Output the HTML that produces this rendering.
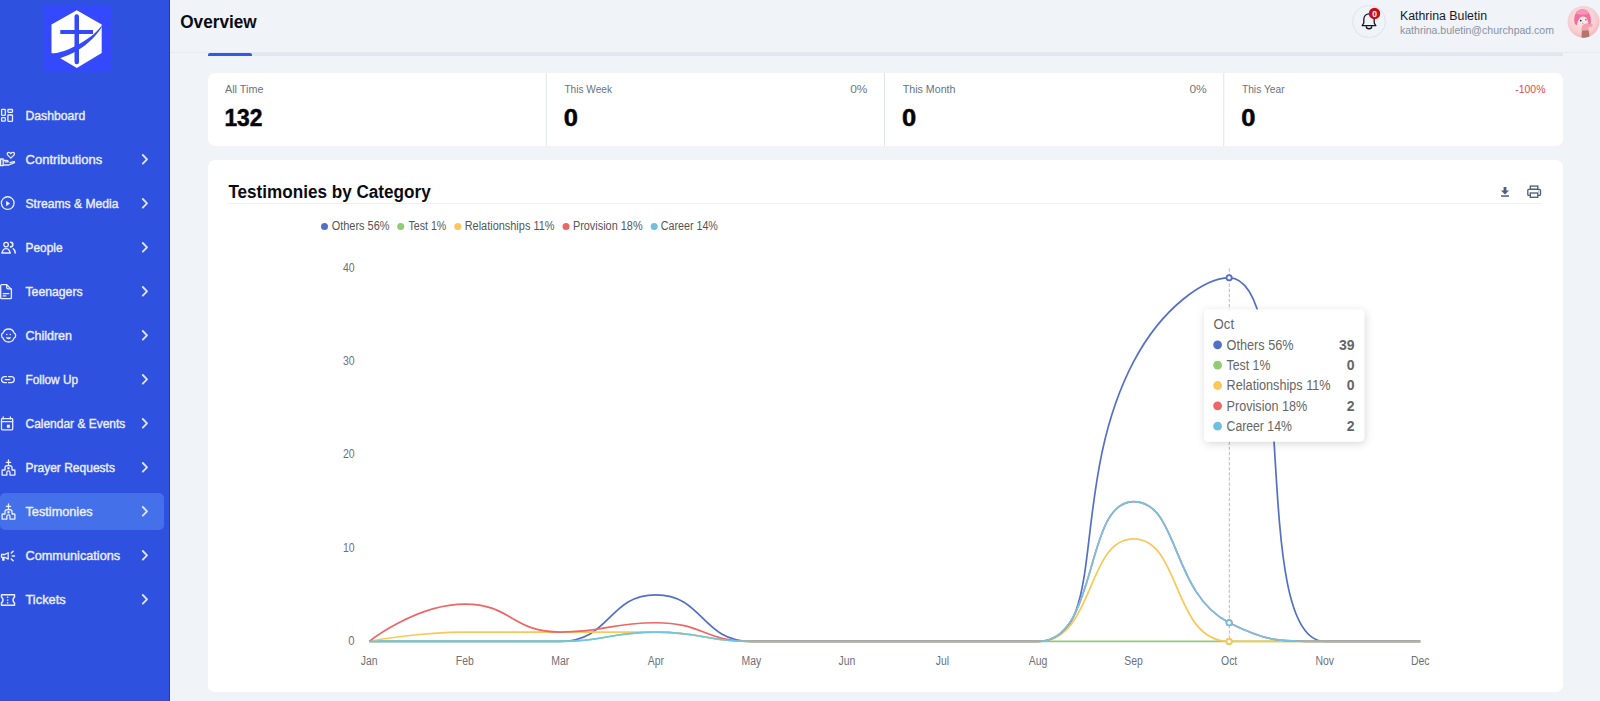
<!DOCTYPE html>
<html><head><meta charset="utf-8">
<style>
*{margin:0;padding:0;box-sizing:border-box}
html,body{width:1600px;height:701px;overflow:hidden;background:#f0f3f8;font-family:"Liberation Sans",sans-serif;position:relative}
.abs{position:absolute}
#sb{position:absolute;left:0;top:0;width:170px;height:701px;background:#2f51e0;border-right:1px solid #0b3de6}
.logo{position:absolute;left:43px;top:5px;width:68px;height:67px;background:#3349fb;border-radius:4px}
.mi{position:absolute;left:0;width:164px;height:38px}
.mi .t{position:absolute;left:25.5px;top:0;line-height:38px;font-size:13px;font-weight:bold;color:#e9edff;white-space:nowrap;letter-spacing:-0.5px}
.mi svg.ic{position:absolute;left:0;top:12px}
.mi svg.ch{position:absolute;left:140px;top:13px}
.active{background:#4470ea;border-radius:5px}
.txt{position:absolute;white-space:nowrap;line-height:1}
.card{position:absolute;background:#fff;border-radius:7px}
svg text{font-family:"Liberation Sans",sans-serif}
</style></head><body>
<div id="sb">
  <div class="logo"></div>
  <svg class="abs" style="left:0;top:0" width="170" height="80" viewBox="0 0 170 80">
    <polygon points="76.8,10.3 101.7,24.5 101.7,53 76.8,68 51.5,53 51.5,24.5" fill="#fff"/>
    <path d="M51.5 53.6 C67.2 53.3 94.6 37.2 101.7 25.3 L101.7 27.3 C87.2 49.8 63.3 58 55.4 59.3 L51.5 53.6 Z" fill="#3349fb"/>
    <rect x="74.5" y="14.3" width="4.5" height="50" rx="2.2" fill="#3349fb"/>
    <rect x="60.3" y="30" width="32.7" height="4" fill="#3349fb"/>
  </svg>
  <div class="abs active" style="left:0;top:493.2px;width:164px;height:37.3px"></div>
<svg class="abs" style="left:0;top:0" width="170" height="701">
<g transform="translate(0,96.00)" fill="none" stroke="#eaeeff" stroke-width="1.3" stroke-linecap="round" stroke-linejoin="round"><rect x="1.6" y="13.3" width="3.7" height="6" rx="0.5"/><rect x="1.6" y="21.7" width="3.7" height="3.4" rx="0.5"/><rect x="7.9" y="13.5" width="4.6" height="2.8" rx="0.5"/><rect x="7.9" y="19" width="4.6" height="6.3" rx="0.5"/></g>
<text x="25.50" y="119.80" font-size="13" fill="#eaeeff" font-weight="normal" text-anchor="start" textLength="59.7" lengthAdjust="spacingAndGlyphs" stroke="#eaeeff" stroke-width="0.4">Dashboard</text>
<g transform="translate(0,140.00)" fill="none" stroke="#eaeeff" stroke-width="1.3" stroke-linecap="round" stroke-linejoin="round"><path d="M10.85 18.1 L7.8 15.1 C6.6 13.9 7.4 12.4 8.9 12.4 C9.8 12.4 10.5 13 10.85 13.7 C11.2 13 11.9 12.4 12.8 12.4 C14.3 12.4 15.1 13.9 13.9 15.1 Z"/><path d="M0.6 19 h2.6 v6.6 h-2.6z"/><path d="M3.2 20.3 h3.4 c0.9 0 1.6 0.6 1.6 1.5 h-3.2 M3.2 25 h5.6 l5.3-2.1 c0.8-0.4 0.4-1.6-0.5-1.3 l-3.6 1.1"/></g>
<text x="25.50" y="163.80" font-size="13" fill="#eaeeff" font-weight="normal" text-anchor="start" textLength="76.7" lengthAdjust="spacingAndGlyphs" stroke="#eaeeff" stroke-width="0.4">Contributions</text>
<path d="M142.8 155.00 l4.2 4.3 -4.2 4.3" fill="none" stroke="#dfe4f7" stroke-width="1.9" stroke-linecap="round" stroke-linejoin="round"/>
<g transform="translate(0,184.00)" fill="none" stroke="#eaeeff" stroke-width="1.3" stroke-linecap="round" stroke-linejoin="round"><circle cx="7.7" cy="19.1" r="6.35"/><path d="M6.1 16.8 l3.9 2.7 -3.9 2.7z" fill="#eaeeff" stroke="none"/></g>
<text x="25.50" y="207.80" font-size="13" fill="#eaeeff" font-weight="normal" text-anchor="start" textLength="92.9" lengthAdjust="spacingAndGlyphs" stroke="#eaeeff" stroke-width="0.4">Streams &amp; Media</text>
<path d="M142.8 199.00 l4.2 4.3 -4.2 4.3" fill="none" stroke="#dfe4f7" stroke-width="1.9" stroke-linecap="round" stroke-linejoin="round"/>
<g transform="translate(0,228.00)" fill="none" stroke="#eaeeff" stroke-width="1.3" stroke-linecap="round" stroke-linejoin="round"><circle cx="6.1" cy="16.6" r="2.3"/><path d="M1.8 25 l1.2-2.6 c0.6-1.2 1.8-1.8 3.1-1.8 s2.5 0.6 3.1 1.8 l1.2 2.6z"/><path d="M10.6 14.3 c1.3 0 2.2 1 2.2 2.3 s-0.9 2.3-2.2 2.3" stroke-width="1.6"/><path d="M13.3 20.9 c1.1 0.6 1.8 2 1.9 4.1" stroke-width="1.6"/></g>
<text x="25.50" y="251.80" font-size="13" fill="#eaeeff" font-weight="normal" text-anchor="start" textLength="37.1" lengthAdjust="spacingAndGlyphs" stroke="#eaeeff" stroke-width="0.4">People</text>
<path d="M142.8 243.00 l4.2 4.3 -4.2 4.3" fill="none" stroke="#dfe4f7" stroke-width="1.9" stroke-linecap="round" stroke-linejoin="round"/>
<g transform="translate(0,272.00)" fill="none" stroke="#eaeeff" stroke-width="1.3" stroke-linecap="round" stroke-linejoin="round"><path d="M0.7 13.7 c0-0.6 0.4-1 1-1 h5 l4.7 4.7 v8.3 c0 0.6-0.4 1-1 1 h-8.7 c-0.6 0-1-0.4-1-1z"/><path d="M6.7 12.9 v2.6 c0 0.8 0.5 1.3 1.3 1.3 h3.2"/><path d="M3.2 21.6 h5.6 M3.2 23.9 h2.6"/></g>
<text x="25.50" y="295.80" font-size="13" fill="#eaeeff" font-weight="normal" text-anchor="start" textLength="57.1" lengthAdjust="spacingAndGlyphs" stroke="#eaeeff" stroke-width="0.4">Teenagers</text>
<path d="M142.8 287.00 l4.2 4.3 -4.2 4.3" fill="none" stroke="#dfe4f7" stroke-width="1.9" stroke-linecap="round" stroke-linejoin="round"/>
<g transform="translate(0,316.00)" fill="none" stroke="#eaeeff" stroke-width="1.3" stroke-linecap="round" stroke-linejoin="round"><path d="M1.5 19.5 c0-1.6 0.8-2.2 1.6-2.6 c0.8-2.3 3-3.9 5.5-3.9 s4.7 1.6 5.5 3.9 c0.8 0.4 1.6 1 1.6 2.6 s-0.8 2.2-1.6 2.6 c-0.8 2.3-3 3.9-5.5 3.9 s-4.7-1.6-5.5-3.9 c-0.8-0.4-1.6-1-1.6-2.6z"/><circle cx="6.8" cy="18.6" r="0.75" fill="#eaeeff" stroke="none"/><circle cx="10.3" cy="18.6" r="0.75" fill="#eaeeff" stroke="none"/><path d="M5.9 21.3 h5.2 c-0.3 1.3-1.3 2-2.6 2 s-2.3-0.7-2.6-2z" fill="#eaeeff" stroke="none"/></g>
<text x="25.50" y="339.80" font-size="13" fill="#eaeeff" font-weight="normal" text-anchor="start" textLength="46.5" lengthAdjust="spacingAndGlyphs" stroke="#eaeeff" stroke-width="0.4">Children</text>
<path d="M142.8 331.00 l4.2 4.3 -4.2 4.3" fill="none" stroke="#dfe4f7" stroke-width="1.9" stroke-linecap="round" stroke-linejoin="round"/>
<g transform="translate(0,360.00)" fill="none" stroke="#eaeeff" stroke-width="1.3" stroke-linecap="round" stroke-linejoin="round"><path d="M6.5 16.55 h-1.95 a3.05 3.05 0 0 0 0 6.1 h1.95 M8.6 16.55 h2.65 a3.05 3.05 0 0 1 0 6.1 h-2.65 M5.2 19.6 h4.7"/></g>
<text x="25.50" y="383.80" font-size="13" fill="#eaeeff" font-weight="normal" text-anchor="start" textLength="52.5" lengthAdjust="spacingAndGlyphs" stroke="#eaeeff" stroke-width="0.4">Follow Up</text>
<path d="M142.8 375.00 l4.2 4.3 -4.2 4.3" fill="none" stroke="#dfe4f7" stroke-width="1.9" stroke-linecap="round" stroke-linejoin="round"/>
<g transform="translate(0,404.00)" fill="none" stroke="#eaeeff" stroke-width="1.3" stroke-linecap="round" stroke-linejoin="round"><rect x="1.5" y="14.7" width="11.2" height="11.1" rx="0.8"/><path d="M1.5 17.6 h11.2 M3.2 13 v1.8 M10.4 13 v1.8"/><rect x="6.9" y="20.7" width="3" height="3.1" fill="#eaeeff" stroke="none"/></g>
<text x="25.50" y="427.80" font-size="13" fill="#eaeeff" font-weight="normal" text-anchor="start" textLength="99.8" lengthAdjust="spacingAndGlyphs" stroke="#eaeeff" stroke-width="0.4">Calendar &amp; Events</text>
<path d="M142.8 419.00 l4.2 4.3 -4.2 4.3" fill="none" stroke="#dfe4f7" stroke-width="1.9" stroke-linecap="round" stroke-linejoin="round"/>
<g transform="translate(0,448.00)" fill="none" stroke="#eaeeff" stroke-width="1.3" stroke-linecap="round" stroke-linejoin="round"><path d="M6.9 27.1 h-4.8 v-4.4 c0-0.4 0.3-0.7 0.7-0.7 h2.2 v-2.4 c0-1.2 1.6-2.1 3.5-2.1 s3.5 0.9 3.5 2.1 v2.4 h2.2 c0.4 0 0.7 0.3 0.7 0.7 v4.4 h-4.9 v-2.6 c0-0.9-0.7-1.6-1.6-1.6 s-1.6 0.7-1.6 1.6 z"/><path d="M8.5 12 v4.6 M6.4 14.4 h4.2"/><circle cx="8.5" cy="20.3" r="0.6"/></g>
<text x="25.50" y="471.80" font-size="13" fill="#eaeeff" font-weight="normal" text-anchor="start" textLength="89.4" lengthAdjust="spacingAndGlyphs" stroke="#eaeeff" stroke-width="0.4">Prayer Requests</text>
<path d="M142.8 463.00 l4.2 4.3 -4.2 4.3" fill="none" stroke="#dfe4f7" stroke-width="1.9" stroke-linecap="round" stroke-linejoin="round"/>
<g transform="translate(0,492.00)" fill="none" stroke="#eaeeff" stroke-width="1.3" stroke-linecap="round" stroke-linejoin="round"><path d="M6.9 27.1 h-4.8 v-4.4 c0-0.4 0.3-0.7 0.7-0.7 h2.2 v-2.4 c0-1.2 1.6-2.1 3.5-2.1 s3.5 0.9 3.5 2.1 v2.4 h2.2 c0.4 0 0.7 0.3 0.7 0.7 v4.4 h-4.9 v-2.6 c0-0.9-0.7-1.6-1.6-1.6 s-1.6 0.7-1.6 1.6 z"/><path d="M8.5 12 v4.6 M6.4 14.4 h4.2"/><circle cx="8.5" cy="20.3" r="0.6"/></g>
<text x="25.50" y="515.80" font-size="13" fill="#eaeeff" font-weight="normal" text-anchor="start" textLength="67.1" lengthAdjust="spacingAndGlyphs" stroke="#eaeeff" stroke-width="0.4">Testimonies</text>
<path d="M142.8 507.00 l4.2 4.3 -4.2 4.3" fill="none" stroke="#dfe4f7" stroke-width="1.9" stroke-linecap="round" stroke-linejoin="round"/>
<g transform="translate(0,536.00)" fill="none" stroke="#eaeeff" stroke-width="1.3" stroke-linecap="round" stroke-linejoin="round"><path d="M1.5 18.5 h3.3 l3.4-1.8 v6.4 l-3.4-1.8 h-3.3 z"/><path d="M2.7 21.6 v2.6 h1.3 v-2.6"/><path d="M11.3 17 l1.8-1.8 M12.2 20 h2.3 M11.3 23 l1.8 1.8" stroke-width="1.5"/></g>
<text x="25.50" y="559.80" font-size="13" fill="#eaeeff" font-weight="normal" text-anchor="start" textLength="94.7" lengthAdjust="spacingAndGlyphs" stroke="#eaeeff" stroke-width="0.4">Communications</text>
<path d="M142.8 551.00 l4.2 4.3 -4.2 4.3" fill="none" stroke="#dfe4f7" stroke-width="1.9" stroke-linecap="round" stroke-linejoin="round"/>
<g transform="translate(0,580.00)" fill="none" stroke="#eaeeff" stroke-width="1.3" stroke-linecap="round" stroke-linejoin="round"><path d="M1.5 14.8 h13 v2.4 c-1 0.7-1.5 1.7-1.5 2.8 s0.5 2.1 1.5 2.8 v2.4 h-13 v-2.4 c1-0.7 1.5-1.7 1.5-2.8 s-0.5-2.1-1.5-2.8 z" stroke-width="1.5"/><rect x="6.9" y="16.6" width="1.4" height="1.4" fill="#eaeeff" stroke="none"/><rect x="6.9" y="19.4" width="1.4" height="1.4" fill="#eaeeff" stroke="none"/><rect x="6.9" y="22.1" width="1.4" height="1.4" fill="#eaeeff" stroke="none"/></g>
<text x="25.50" y="603.80" font-size="13" fill="#eaeeff" font-weight="normal" text-anchor="start" textLength="40.2" lengthAdjust="spacingAndGlyphs" stroke="#eaeeff" stroke-width="0.4">Tickets</text>
<path d="M142.8 595.00 l4.2 4.3 -4.2 4.3" fill="none" stroke="#dfe4f7" stroke-width="1.9" stroke-linecap="round" stroke-linejoin="round"/>
</svg>
</div>
<!-- header -->
<svg class="abs" style="left:0;top:0" width="400" height="50"><text x="180.20" y="28.30" font-size="18" fill="#0b0b12" font-weight="bold" text-anchor="start" textLength="76.5" lengthAdjust="spacingAndGlyphs">Overview</text></svg>
<div class="abs" style="left:170px;top:52px;width:1430px;height:1px;background:#e6e9ef"></div>
<div class="abs" style="left:208px;top:53.4px;width:1355px;height:2.7px;background:#e2e6ee"></div>
<div class="abs" style="left:207.8px;top:53.4px;width:44.1px;height:2.7px;background:#2d5ae8;border-radius:2px 2px 0 0"></div>
<div class="abs" style="left:1352.2px;top:4.9px;width:33.6px;height:33.6px;border:1px solid #dfe3ec;border-radius:50%"></div>
<svg class="abs" style="left:0;top:0" width="1600" height="50">
<path d="M1362.2 25.6 l1.6-2.6 v-3.6 c0-3.2 2.3-5.6 5.2-5.6 s5.2 2.4 5.2 5.6 v3.6 l1.6 2.6z" fill="none" stroke="#15151f" stroke-width="1.3" stroke-linejoin="round"/>
<path d="M1366.3 26.2 a2.7 2.6 0 0 0 5.4 0" fill="none" stroke="#15151f" stroke-width="1.4"/>
<circle cx="1374.5" cy="13.5" r="5.7" fill="#c3101c"/>
<text x="1374.50" y="16.60" font-size="8.5" fill="#fff" font-weight="bold" text-anchor="middle">0</text>
<text x="1400.00" y="19.90" font-size="12" fill="#1a1a2b" font-weight="normal" text-anchor="start" textLength="87.0" lengthAdjust="spacingAndGlyphs">Kathrina Buletin</text>
<text x="1400.00" y="33.70" font-size="10.5" fill="#8891a3" font-weight="normal" text-anchor="start" textLength="154.0" lengthAdjust="spacingAndGlyphs">kathrina.buletin@churchpad.com</text>
<defs><radialGradient id="av" cx="0.45" cy="0.4" r="0.65"><stop offset="0" stop-color="#fde8e8"/><stop offset="0.7" stop-color="#f7cdd0"/><stop offset="1" stop-color="#efb3b9"/></radialGradient><clipPath id="avc"><circle cx="1583.5" cy="21.8" r="15.9"/></clipPath></defs>
<circle cx="1583.5" cy="21.8" r="15.9" fill="url(#av)"/>
<g clip-path="url(#avc)">
<path d="M1581.5 29 c0-3 1.5-5 3.5-5.5 l4.5-0.5 c1.5 0 3 0.8 3.2 2 c0.2 1.2-1 2-2.5 2 l-2.2 0.5 c1.3 2 1.5 5 1.3 10.5 h-7.8 z" fill="#f0a2b2"/>
<path d="M1582.3 30.5 h6.3 c0.6 2.5 0.8 5 0.6 8 h-7.5 c-0.2-3 0.1-5.5 0.6-8z" fill="#b5736d"/>
<path d="M1574.5 22 c-0.8-3.5 0-7 1.8-9.6 c2.5-3.6 8.5-4.5 11.5-0.9 c1.9 2.3 3.4 5.5 3.2 9.5 c-0.1 2-1 3.4-2.2 3.6 c-0.4-2.4-1.2-4-2.2-5 l-7.6 0 c-1 1.2-1.8 3-2 5.4 c-1.5 0.3-2.3-0.8-2.5-3z" fill="#ef6f9e"/>
<path d="M1576.8 12.5 c2.5-3.5 8.3-4 11 -0.5 c0.8 1.1 0.2 2-0.8 2.2 c-3 0.5-7 0.5-9.8 0 c-1-0.2-1-0.9-0.4-1.7z" fill="#f596b8"/>
<ellipse cx="1583.1" cy="20.4" rx="4.4" ry="3.9" fill="#f6e7e1"/>
<circle cx="1580.7" cy="20.6" r="0.9" fill="#2b1d22"/><circle cx="1585.9" cy="19.7" r="0.8" fill="#6d5a5e"/>
<ellipse cx="1582.8" cy="23.3" rx="0.9" ry="0.5" fill="#e7898f"/>
</g>
</svg>
<!-- stats -->
<div class="card" style="left:208px;top:73px;width:1355px;height:73px"></div>
<svg class="abs" style="left:0;top:0" width="1600" height="150">
<text x="225.00" y="93.30" font-size="11.2" fill="#6b7280" font-weight="normal" text-anchor="start" textLength="38.4" lengthAdjust="spacingAndGlyphs">All Time</text>
<text x="224.40" y="126.10" font-size="23.3" fill="#050508" font-weight="bold" text-anchor="start" textLength="38.0" lengthAdjust="spacingAndGlyphs" stroke="#050508" stroke-width="0.5">132</text>
<rect x="545.75" y="73" width="1" height="73" fill="#dfe3ea"/>
<text x="564.45" y="93.30" font-size="11.2" fill="#6b7280" font-weight="normal" text-anchor="start" textLength="47.6" lengthAdjust="spacingAndGlyphs">This Week</text>
<text x="563.85" y="126.10" font-size="23.3" fill="#050508" font-weight="bold" text-anchor="start" textLength="14.2" lengthAdjust="spacingAndGlyphs" stroke="#050508" stroke-width="0.5">0</text>
<text x="867.50" y="93.30" font-size="11.2" fill="#707783" font-weight="normal" text-anchor="end" textLength="17.3" lengthAdjust="spacingAndGlyphs">0%</text>
<rect x="884.00" y="73" width="1" height="73" fill="#dfe3ea"/>
<text x="902.70" y="93.30" font-size="11.2" fill="#6b7280" font-weight="normal" text-anchor="start" textLength="52.8" lengthAdjust="spacingAndGlyphs">This Month</text>
<text x="902.10" y="126.10" font-size="23.3" fill="#050508" font-weight="bold" text-anchor="start" textLength="14.2" lengthAdjust="spacingAndGlyphs" stroke="#050508" stroke-width="0.5">0</text>
<text x="1206.75" y="93.30" font-size="11.2" fill="#707783" font-weight="normal" text-anchor="end" textLength="17.3" lengthAdjust="spacingAndGlyphs">0%</text>
<rect x="1223.25" y="73" width="1" height="73" fill="#dfe3ea"/>
<text x="1241.95" y="93.30" font-size="11.2" fill="#6b7280" font-weight="normal" text-anchor="start" textLength="42.6" lengthAdjust="spacingAndGlyphs">This Year</text>
<text x="1241.35" y="126.10" font-size="23.3" fill="#050508" font-weight="bold" text-anchor="start" textLength="14.2" lengthAdjust="spacingAndGlyphs" stroke="#050508" stroke-width="0.5">0</text>
<text x="1545.50" y="93.30" font-size="11.2" fill="#e5484d" font-weight="normal" text-anchor="end" textLength="30.3" lengthAdjust="spacingAndGlyphs">-100%</text>
</svg>
<!-- chart card -->
<div class="card" style="left:208px;top:159.5px;width:1355px;height:532.5px"></div>
<svg class="abs" style="left:0;top:170px" width="600" height="40"><g transform="translate(0,-170)"><text x="228.40" y="197.60" font-size="18.3" fill="#0b0b12" font-weight="bold" text-anchor="start" textLength="202.3" lengthAdjust="spacingAndGlyphs">Testimonies by Category</text></g></svg>
<div class="abs" style="left:228px;top:203.2px;width:1314px;height:1.3px;background:#edf0f5"></div>
<svg class="abs" style="left:0;top:0" width="1600" height="701">
<defs><filter id="sh" x="-20%" y="-20%" width="140%" height="140%"><feDropShadow dx="1" dy="2" stdDeviation="4" flood-color="#000" flood-opacity="0.16"/></filter></defs>
<path d="M1503.6 187 h2.8 v3.4 h2.6 l-4 4 -4-4 h2.6z" fill="#4d5f7e"/><rect x="1501" y="195.3" width="8" height="1.5" fill="#4d5f7e"/>
<g fill="none" stroke="#4d5f7e" stroke-width="1.35"><rect x="1530.3" y="186.1" width="7.5" height="3.2"/><path d="M1530.3 195.3 h-1.6 c-0.5 0-0.9-0.4-0.9-0.9 v-4.1 c0-0.5 0.4-0.9 0.9-0.9 h10.9 c0.5 0 0.9 0.4 0.9 0.9 v4.1 c0 0.5-0.4 0.9-0.9 0.9 h-1.6"/><rect x="1530.3" y="193" width="7.5" height="4.3"/></g><circle cx="1538.6" cy="191" r="0.5" fill="#4d5f7e"/>
<circle cx="324.5" cy="226.6" r="3.5" fill="#5470c6"/>
<text x="331.70" y="230.20" font-size="12.3" fill="#555" font-weight="normal" text-anchor="start" textLength="57.8" lengthAdjust="spacingAndGlyphs">Others 56%</text>
<circle cx="400.7" cy="226.6" r="3.5" fill="#91cc75"/>
<text x="408.40" y="230.20" font-size="12.3" fill="#555" font-weight="normal" text-anchor="start" textLength="37.9" lengthAdjust="spacingAndGlyphs">Test 1%</text>
<circle cx="457.8" cy="226.6" r="3.5" fill="#fac858"/>
<text x="464.70" y="230.20" font-size="12.3" fill="#555" font-weight="normal" text-anchor="start" textLength="89.8" lengthAdjust="spacingAndGlyphs">Relationships 11%</text>
<circle cx="566.0" cy="226.6" r="3.5" fill="#ee6666"/>
<text x="572.90" y="230.20" font-size="12.3" fill="#555" font-weight="normal" text-anchor="start" textLength="69.7" lengthAdjust="spacingAndGlyphs">Provision 18%</text>
<circle cx="654.2" cy="226.6" r="3.5" fill="#73c0de"/>
<text x="660.70" y="230.20" font-size="12.3" fill="#555" font-weight="normal" text-anchor="start" textLength="57.2" lengthAdjust="spacingAndGlyphs">Career 14%</text>
<text x="354.60" y="645.10" font-size="12" fill="#6e7079" font-weight="normal" text-anchor="end" textLength="6.3" lengthAdjust="spacingAndGlyphs">0</text>
<text x="354.60" y="551.75" font-size="12" fill="#6e7079" font-weight="normal" text-anchor="end" textLength="11.7" lengthAdjust="spacingAndGlyphs">10</text>
<text x="354.60" y="458.40" font-size="12" fill="#6e7079" font-weight="normal" text-anchor="end" textLength="11.7" lengthAdjust="spacingAndGlyphs">20</text>
<text x="354.60" y="365.05" font-size="12" fill="#6e7079" font-weight="normal" text-anchor="end" textLength="11.7" lengthAdjust="spacingAndGlyphs">30</text>
<text x="354.60" y="271.70" font-size="12" fill="#6e7079" font-weight="normal" text-anchor="end" textLength="11.7" lengthAdjust="spacingAndGlyphs">40</text>
<text x="369.20" y="664.60" font-size="12" fill="#6e7079" font-weight="normal" text-anchor="middle" textLength="16.8" lengthAdjust="spacingAndGlyphs">Jan</text>
<text x="464.75" y="664.60" font-size="12" fill="#6e7079" font-weight="normal" text-anchor="middle" textLength="18.0" lengthAdjust="spacingAndGlyphs">Feb</text>
<text x="560.30" y="664.60" font-size="12" fill="#6e7079" font-weight="normal" text-anchor="middle" textLength="18.0" lengthAdjust="spacingAndGlyphs">Mar</text>
<text x="655.85" y="664.60" font-size="12" fill="#6e7079" font-weight="normal" text-anchor="middle" textLength="16.2" lengthAdjust="spacingAndGlyphs">Apr</text>
<text x="751.40" y="664.60" font-size="12" fill="#6e7079" font-weight="normal" text-anchor="middle" textLength="19.7" lengthAdjust="spacingAndGlyphs">May</text>
<text x="846.95" y="664.60" font-size="12" fill="#6e7079" font-weight="normal" text-anchor="middle" textLength="16.8" lengthAdjust="spacingAndGlyphs">Jun</text>
<text x="942.50" y="664.60" font-size="12" fill="#6e7079" font-weight="normal" text-anchor="middle" textLength="13.3" lengthAdjust="spacingAndGlyphs">Jul</text>
<text x="1038.05" y="664.60" font-size="12" fill="#6e7079" font-weight="normal" text-anchor="middle" textLength="18.6" lengthAdjust="spacingAndGlyphs">Aug</text>
<text x="1133.60" y="664.60" font-size="12" fill="#6e7079" font-weight="normal" text-anchor="middle" textLength="18.6" lengthAdjust="spacingAndGlyphs">Sep</text>
<text x="1229.15" y="664.60" font-size="12" fill="#6e7079" font-weight="normal" text-anchor="middle" textLength="16.2" lengthAdjust="spacingAndGlyphs">Oct</text>
<text x="1324.70" y="664.60" font-size="12" fill="#6e7079" font-weight="normal" text-anchor="middle" textLength="18.6" lengthAdjust="spacingAndGlyphs">Nov</text>
<text x="1420.25" y="664.60" font-size="12" fill="#6e7079" font-weight="normal" text-anchor="middle" textLength="18.6" lengthAdjust="spacingAndGlyphs">Dec</text>
<line x1="1229.3" y1="268.2" x2="1229.3" y2="641" stroke="#b6b9be" stroke-width="1" stroke-dasharray="3.4 1.7"/>
<path d="M369.20 641.40 C369.20 641.40 416.98 641.40 464.75 641.40 C512.52 641.40 515.07 641.40 560.30 641.40 C610.62 641.40 608.07 594.79 655.85 594.79 C703.62 594.79 701.08 641.40 751.40 641.40 C796.63 641.40 799.17 641.40 846.95 641.40 C894.73 641.40 894.73 641.40 942.50 641.40 C990.27 641.40 1014.71 641.40 1038.05 641.40 C1110.26 641.40 1066.79 488.83 1133.60 361.72 C1162.34 307.04 1205.00 277.82 1229.15 277.82 C1300.55 277.82 1248.51 641.40 1324.70 641.40 C1344.06 641.40 1420.25 641.40 1420.25 641.40" fill="none" stroke="#5470c6" stroke-width="1.7" stroke-linejoin="bevel"/>
<path d="M369.20 641.40 C369.20 641.40 416.98 641.40 464.75 641.40 C512.52 641.40 512.64 641.40 560.30 641.40 C608.19 641.40 608.07 632.08 655.85 632.08 C703.62 632.08 703.51 641.40 751.40 641.40 C799.06 641.40 799.17 641.40 846.95 641.40 C894.73 641.40 894.73 641.40 942.50 641.40 C990.27 641.40 990.28 641.40 1038.05 641.40 C1085.82 641.40 1085.82 641.40 1133.60 641.40 C1181.38 641.40 1181.38 641.40 1229.15 641.40 C1276.92 641.40 1276.93 641.40 1324.70 641.40 C1372.47 641.40 1420.25 641.40 1420.25 641.40" fill="none" stroke="#91cc75" stroke-width="1.7" stroke-linejoin="bevel"/>
<path d="M369.20 641.40 C369.20 641.40 416.86 632.08 464.75 632.08 C512.41 632.08 512.52 632.08 560.30 632.08 C608.07 632.08 608.19 632.08 655.85 632.08 C703.74 632.08 703.51 641.40 751.40 641.40 C799.06 641.40 799.17 641.40 846.95 641.40 C894.73 641.40 894.73 641.40 942.50 641.40 C990.27 641.40 999.32 641.40 1038.05 641.40 C1094.87 641.40 1085.82 538.85 1133.60 538.85 C1181.38 538.85 1172.33 641.40 1229.15 641.40 C1267.88 641.40 1276.93 641.40 1324.70 641.40 C1372.47 641.40 1420.25 641.40 1420.25 641.40" fill="none" stroke="#fac858" stroke-width="1.7" stroke-linejoin="bevel"/>
<path d="M369.20 641.40 C369.20 641.40 416.26 604.11 464.75 604.11 C511.81 604.11 511.66 632.08 560.30 632.08 C607.21 632.08 608.41 622.75 655.85 622.75 C703.96 622.75 703.18 641.40 751.40 641.40 C798.73 641.40 799.17 641.40 846.95 641.40 C894.73 641.40 894.73 641.40 942.50 641.40 C990.27 641.40 1003.59 641.40 1038.05 641.40 C1099.14 641.40 1083.61 501.56 1133.60 501.56 C1179.16 501.56 1170.56 593.20 1229.15 622.75 C1266.11 641.40 1276.48 641.40 1324.70 641.40 C1372.03 641.40 1420.25 641.40 1420.25 641.40" fill="none" stroke="#ee6666" stroke-width="1.7" stroke-linejoin="bevel"/>
<path d="M369.20 641.40 C369.20 641.40 416.98 641.40 464.75 641.40 C512.52 641.40 512.64 641.40 560.30 641.40 C608.19 641.40 608.07 632.08 655.85 632.08 C703.62 632.08 703.51 641.40 751.40 641.40 C799.06 641.40 799.17 641.40 846.95 641.40 C894.73 641.40 894.73 641.40 942.50 641.40 C990.27 641.40 1003.59 641.40 1038.05 641.40 C1099.14 641.40 1083.61 501.56 1133.60 501.56 C1179.16 501.56 1170.56 593.20 1229.15 622.75 C1266.11 641.40 1276.48 641.40 1324.70 641.40 C1372.03 641.40 1420.25 641.40 1420.25 641.40" fill="none" stroke="#70c4e4" stroke-width="1.7" stroke-linejoin="bevel"/>
<circle cx="1229.15" cy="277.82" r="2.6" fill="#fff" stroke="#5470c6" stroke-width="1.8"/>
<circle cx="1229.15" cy="641.40" r="2.6" fill="#fff" stroke="#91cc75" stroke-width="1.8"/>
<circle cx="1229.15" cy="641.40" r="2.6" fill="#fff" stroke="#fac858" stroke-width="1.8"/>
<circle cx="1229.15" cy="622.75" r="2.6" fill="#fff" stroke="#ee6666" stroke-width="1.8"/>
<circle cx="1229.15" cy="622.75" r="2.6" fill="#fff" stroke="#73c0de" stroke-width="1.8"/>
<rect x="1204.1" y="309.6" width="160" height="132" rx="4" fill="#fff" filter="url(#sh)"/>
<text x="1213.60" y="329.40" font-size="14" fill="#666" font-weight="normal" text-anchor="start" textLength="20.5" lengthAdjust="spacingAndGlyphs">Oct</text>
<circle cx="1217.6" cy="344.80" r="4.4" fill="#5470c6"/>
<text x="1226.60" y="349.60" font-size="14" fill="#666" font-weight="normal" text-anchor="start" textLength="67.0" lengthAdjust="spacingAndGlyphs">Others 56%</text>
<text x="1354.60" y="349.60" font-size="14" fill="#666" font-weight="bold" text-anchor="end">39</text>
<circle cx="1217.6" cy="365.15" r="4.4" fill="#91cc75"/>
<text x="1226.60" y="369.95" font-size="14" fill="#666" font-weight="normal" text-anchor="start" textLength="43.8" lengthAdjust="spacingAndGlyphs">Test 1%</text>
<text x="1354.60" y="369.95" font-size="14" fill="#666" font-weight="bold" text-anchor="end">0</text>
<circle cx="1217.6" cy="385.50" r="4.4" fill="#fac858"/>
<text x="1226.60" y="390.30" font-size="14" fill="#666" font-weight="normal" text-anchor="start" textLength="104.0" lengthAdjust="spacingAndGlyphs">Relationships 11%</text>
<text x="1354.60" y="390.30" font-size="14" fill="#666" font-weight="bold" text-anchor="end">0</text>
<circle cx="1217.6" cy="405.85" r="4.4" fill="#ee6666"/>
<text x="1226.60" y="410.65" font-size="14" fill="#666" font-weight="normal" text-anchor="start" textLength="80.7" lengthAdjust="spacingAndGlyphs">Provision 18%</text>
<text x="1354.60" y="410.65" font-size="14" fill="#666" font-weight="bold" text-anchor="end">2</text>
<circle cx="1217.6" cy="426.20" r="4.4" fill="#73c0de"/>
<text x="1226.60" y="431.00" font-size="14" fill="#666" font-weight="normal" text-anchor="start" textLength="65.2" lengthAdjust="spacingAndGlyphs">Career 14%</text>
<text x="1354.60" y="431.00" font-size="14" fill="#666" font-weight="bold" text-anchor="end">2</text>
</svg>
</body></html>
